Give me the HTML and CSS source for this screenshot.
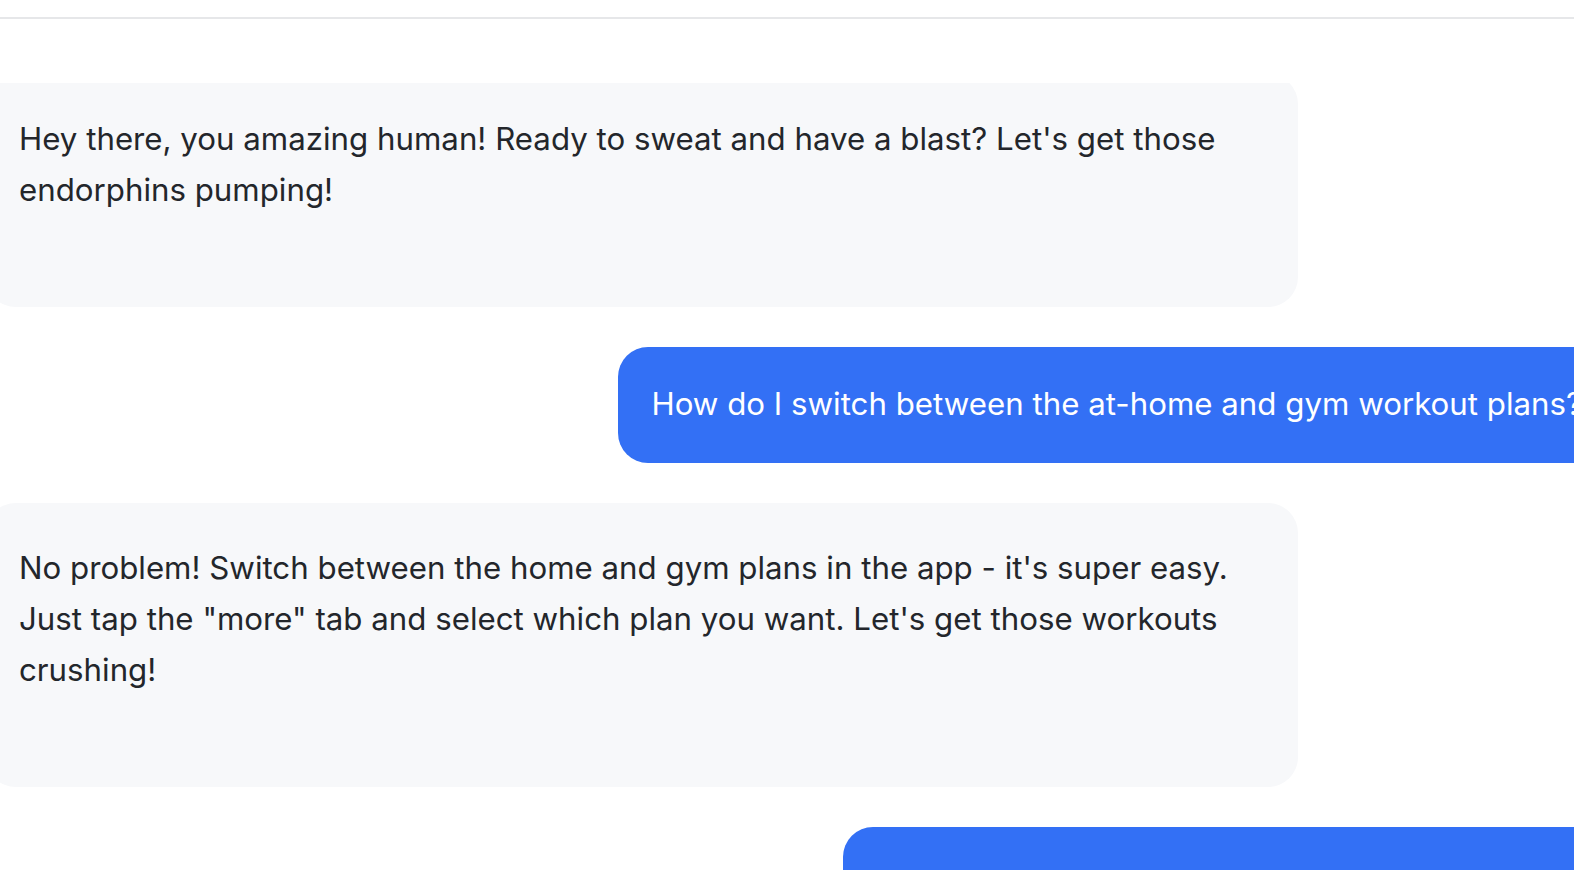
FILE: index.html
```html
<!DOCTYPE html>
<html lang="en">
<head>
<meta charset="utf-8">
<title>Chat</title>
<link rel="stylesheet" href="styles.css">
</head>
<body>
  <header class="topbar"></header>
  <main class="chat">
    <div class="thread">
      <div class="msg bot">
        <p>Hey there, you amazing human! Ready to sweat and have a blast? Let's get those endorphins pumping!</p>
      </div>
      <div class="msg user">
        <p>How do I switch between the at-home and gym workout plans?</p>
      </div>
      <div class="msg bot">
        <p>No problem! Switch between the home and gym plans in the app - it's super easy. Just tap the "more" tab and select which plan you want. Let's get those workouts crushing!</p>
      </div>
      <div class="msg user">
        <p>What is a good warm-up before a gym session?</p>
      </div>
    </div>
  </main>
</body>
</html>
```
FILE: styles.css
```css
html, body {
  margin: 0;
  padding: 0;
  background: #ffffff;
}
body {
  height: 100vh;
  overflow: hidden;
  font-family: Inter, "Noto Sans", "Liberation Sans", sans-serif;
  font-size: 31.25px;
  line-height: 51.2px;
  color: #23262b;
}
.topbar {
  height: 17px;
  border-bottom: 2px solid #e6e7e9;
}
.chat {
  margin-top: 64px;
  height: calc(100vh - 83px);
  overflow: hidden;
}
.thread {
  margin-top: -9px;
  margin-left: -14px;
  width: 1629px;
  display: flex;
  flex-direction: column;
  gap: 40px;
}
.msg p {
  margin: 0;
}
.msg.bot {
  align-self: flex-start;
  box-sizing: border-box;
  width: 1312px;
  padding: 40px 33px 91px;
  background: #f7f8fa;
  border-radius: 30px;
}
.msg.user {
  align-self: flex-end;
  padding: 32px 33px;
  background: #3370f5;
  color: #ffffff;
  border-radius: 30px;
  white-space: nowrap;
}
```
